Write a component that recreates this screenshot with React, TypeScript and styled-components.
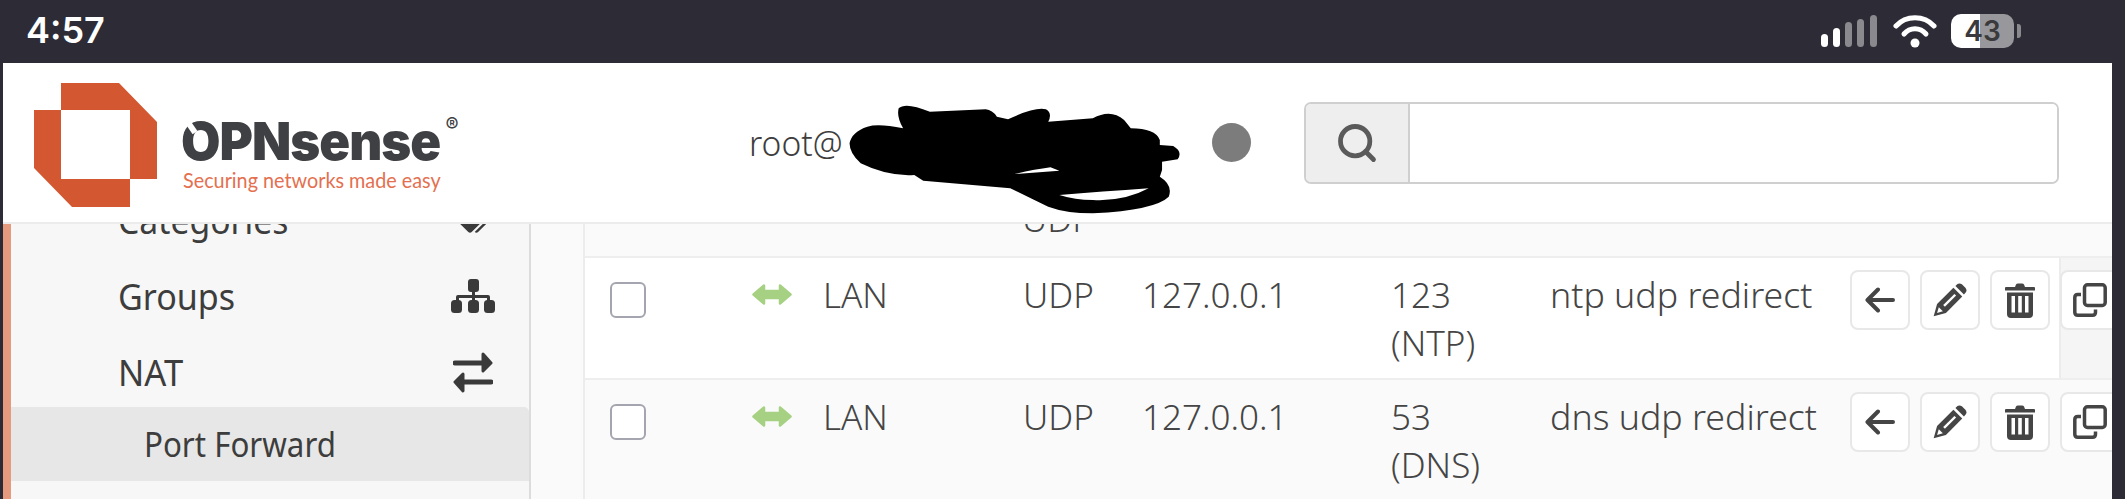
import styled, { createGlobalStyle } from "styled-components";
import { FaTags } from "react-icons/fa";
import { Search } from "lucide-react";

const GlobalStyle = createGlobalStyle`
  html, body {
    margin: 0;
    padding: 0;
    background: #2d2c36;
  }
`;

const Page = styled.div`
  width: 2125px;
  height: 499px;
  overflow: hidden;
  display: flex;
  flex-direction: column;
  background: #2d2c36;
  font-family: "Noto Sans", sans-serif;
  color: #3d3d3d;
`;

const StatusBar = styled.div`
  height: 63px;
  flex: none;
  display: flex;
  align-items: center;
  padding: 0 0 0 26px;
  box-sizing: border-box;
`;

const Clock = styled.span`
  font-family: "Inter", sans-serif;
  font-weight: 600;
  font-size: 36px;
  line-height: 63px;
  color: #fff;
  margin-top: -2px;
`;

const StatusIcons = styled.div`
  margin-left: auto;
  margin-right: 111px;
  display: flex;
  align-items: center;
  gap: 14px;
  margin-top: -2px;
`;

const SignalSvg = styled.svg`
  margin-right: 2px;
`;

const Battery = styled.div`
  position: relative;
  width: 63px;
  height: 34px;
  border-radius: 10px;
  background: linear-gradient(to right, #fff 46%, #98989c 46%);
  font-family: "Inter", sans-serif;
  font-weight: 600;
  font-size: 28px;
  line-height: 34px;
  text-align: center;
  color: #3a3a3c;

  &::after {
    content: "";
    position: absolute;
    left: 66px;
    top: 10px;
    width: 4px;
    height: 14px;
    border-radius: 0 3px 3px 0;
    background: #8a8a8e;
  }
`;

const Frame = styled.div`
  flex: 1;
  min-height: 0;
  margin: 0 13px 0 3px;
  display: flex;
  flex-direction: column;
  background: #fafafa;
`;

const Header = styled.header`
  height: 161px;
  flex: none;
  box-sizing: border-box;
  position: relative;
  display: flex;
  align-items: center;
  padding-left: 31px;
  background: #fff;
  border-bottom: 2px solid #ececec;
  z-index: 1;
`;

const LogoMark = styled.svg`
  width: 123px;
  height: 124px;
  flex: none;
  margin-top: 4px;
`;

const Brand = styled.div`
  margin-left: 24px;
  margin-top: 24px;
  width: 259px;
  display: flex;
  flex-direction: column;
`;

const Wordmark = styled.div`
  position: relative;
  font-family: "Inter", sans-serif;
  font-weight: 900;
  font-size: 52px;
  line-height: 50px;
  letter-spacing: -1px;
  color: #3f4044;
  white-space: nowrap;
  transform: scaleX(0.98);
  transform-origin: left center;

  &::before {
    content: "";
    position: absolute;
    left: 7px;
    top: 2px;
    width: 6px;
    height: 15px;
    background: #fff;
    transform: rotate(-35deg);
  }

  sup {
    position: absolute;
    left: 270px;
    top: -2px;
    font-size: 20px;
    line-height: 20px;
    font-weight: 500;
  }
`;

const Tagline = styled.div`
  font-family: "Lato", sans-serif;
  font-size: 22px;
  line-height: 26px;
  margin-left: 2px;
  white-space: nowrap;
  color: #e4704f;
  transform-origin: left center;
  transform: scaleX(0.9);
`;

const UserName = styled.div`
  margin-left: 309px;
  font-size: 35px;
  font-weight: 300;
  width: 463px;
  flex: none;
  color: #3d3d3d;
`;

const Scribble = styled.svg`
  position: absolute;
  left: 697px;
  top: -3px;
  width: 700px;
  height: 170px;
`;

const StatusDot = styled.span`
  width: 39px;
  height: 39px;
  flex: none;
  border-radius: 50%;
  background: #7c7c7c;
`;

const SearchGroup = styled.div`
  margin-left: 53px;
  width: 755px;
  height: 82px;
  flex: none;
  box-sizing: border-box;
  display: flex;
  border: 2px solid #cfcfcf;
  border-radius: 7px;
  overflow: hidden;
`;

const SearchAddon = styled.div`
  width: 102px;
  flex: none;
  display: flex;
  align-items: center;
  justify-content: center;
  background: #eeeeee;
  border-right: 2px solid #cfcfcf;
  color: #5a5a5a;
`;

const SearchInput = styled.div`
  flex: 1;
  background: #fff;
`;

const Body = styled.div`
  flex: 1;
  min-height: 0;
  display: flex;
  overflow: hidden;
`;

const Sidebar = styled.nav`
  width: 528px;
  flex: none;
  box-sizing: border-box;
  overflow: hidden;
  background: #f7f7f7;
  border-left: 8px solid #e69a7e;
  border-right: 2px solid #dcdcdc;
`;

const SideList = styled.div`
  margin-top: -42px;
  display: flex;
  flex-direction: column;
`;

const SideItem = styled.div<{ $h: number; $shift?: number }>`
  height: ${(p) => p.$h}px;
  flex: none;
  display: flex;
  align-items: center;
  justify-content: space-between;
  padding: ${(p) => p.$shift ?? 0}px 34px 0 107px;
  box-sizing: border-box;
  font-size: 36px;
`;

const ActiveItem = styled.div`
  height: 74px;
  flex: none;
  margin-left: -8px;
  display: flex;
  align-items: center;
  padding-left: 133px;
  font-size: 34px;
  background: #e7e7e7;
  border-left: 8px solid #b04a24;
  border-radius: 5px 5px 0 0;
`;

const Squeeze = styled.span<{ $x: number }>`
  display: inline-block;
  white-space: nowrap;
  transform: scaleX(${(p) => p.$x});
  transform-origin: left center;
`;

const SideIcon = styled.span`
  display: flex;
  justify-content: center;
  width: 44px;
  color: #3a3a3a;

  svg {
    display: block;
  }
`;

const Gutter = styled.div`
  width: 52px;
  flex: none;
  background: #fafafa;
`;

const Table = styled.div`
  flex: 1;
  min-width: 0;
  overflow: hidden;
  border-left: 2px solid #ececec;
`;

const Row = styled.div<{ $first: boolean }>`
  display: grid;
  grid-template-columns: 25px 142px 71px 200px 119px 249px 159px 300px 1fr;
  padding-top: 12px;
  height: ${(p) => (p.$first ? "108px" : "140px")};
  background: ${(p) =>
    p.$first
      ? "linear-gradient(to right, #fff 1474px, #ececec 1474px, #ececec 1476px, #f5f5f5 1476px)"
      : "#fafafa"};
  border-bottom: 2px solid #eeeeee;
  font-size: 35px;
  font-weight: 300;
  line-height: 48px;
  color: #454545;
`;

const ClippedRow = styled.div`
  height: 32px;
  overflow: hidden;
  padding-left: 437px;
  background: #fafafa;
  border-bottom: 2px solid #eeeeee;
  font-size: 35px;
  font-weight: 300;
  line-height: 48px;
  color: #454545;
`;

const ClippedCell = styled.div`
  margin-top: -29px;
`;

const Checkbox = styled.span`
  display: block;
  width: 36px;
  height: 36px;
  box-sizing: border-box;
  border: 2px solid #a5a5b0;
  border-radius: 6px;
  background: #fff;
  margin-top: 12px;
`;

const DirectionIcon = styled.svg`
  display: block;
  width: 40px;
  height: 21px;
  margin-top: 14px;
  color: #a6d182;
`;

const Cell = styled.div`
  padding-top: 1px;
`;

const Actions = styled.div`
  display: flex;
  gap: 10px;
`;

const ActionButton = styled.button`
  width: 60px;
  height: 60px;
  flex: none;
  padding: 0;
  display: flex;
  align-items: center;
  justify-content: center;
  background: #fff;
  border: 2px solid #e8e8e8;
  border-radius: 8px;
  color: #454545;
`;

const rows = [
  { port: "123", service: "(NTP)", name: "ntp udp redirect" },
  { port: "53", service: "(DNS)", name: "dns udp redirect" },
];

function WifiIcon() {
  return (
    <svg width="44" height="34" viewBox="0 0 44 34" fill="none" stroke="#fff" strokeWidth="5" strokeLinecap="round">
      <path d="M3 12 C13 1 31 1 41 12" />
      <path d="M11 20 C17 13 27 13 33 20" />
      <circle cx="22" cy="29" r="4.5" fill="#fff" stroke="none" />
    </svg>
  );
}

function SignalIcon() {
  const bars = [
    { x: 0, h: 13, c: "#fff" },
    { x: 12, h: 19, c: "#fff" },
    { x: 24, h: 25, c: "#8a8a8e" },
    { x: 36, h: 28, c: "#8a8a8e" },
    { x: 49, h: 32, c: "#8a8a8e" },
  ];
  return (
    <SignalSvg width="56" height="32" viewBox="0 0 56 32">
      {bars.map((b) => (
        <rect key={b.x} x={b.x} y={32 - b.h} width="7" height={b.h} rx="3.5" fill={b.c} />
      ))}
    </SignalSvg>
  );
}

function SitemapIcon() {
  return (
    <svg width="44" height="34" viewBox="0 0 44 34" fill="currentColor">
      <rect x="17" y="0" width="11" height="13" rx="3" />
      <rect x="21" y="12" width="3" height="10" />
      <path d="M5 23 V18 Q5 16 7 16 H37 Q39 16 39 18 V23 H36 V19 H8 V23 Z" />
      <rect x="0" y="21" width="11" height="13" rx="3.5" />
      <rect x="17" y="21" width="11" height="13" rx="3.5" />
      <rect x="33" y="21" width="11" height="13" rx="3.5" />
    </svg>
  );
}

function ExchangeIcon() {
  return (
    <svg width="40" height="41" viewBox="0 0 40 41" fill="currentColor" stroke="currentColor" strokeLinejoin="round" strokeLinecap="round">
      <path d="M2 11 H32" strokeWidth="5" fill="none" />
      <path d="M30 2 L38 11 L30 19 Z" strokeWidth="3" />
      <path d="M38 30 H8" strokeWidth="5" fill="none" />
      <path d="M10 22 L2 30 L10 39 Z" strokeWidth="3" />
    </svg>
  );
}

function ArrowsIcon() {
  return (
    <path
      d="M1.5 10.5 L12 1.5 V7 H28 V1.5 L38.5 10.5 L28 19.5 V14 H12 V19.5 Z"
      fill="currentColor"
      stroke="currentColor"
      strokeWidth="2.5"
      strokeLinejoin="round"
    />
  );
}

function BackIcon() {
  return (
    <svg width="30" height="26" viewBox="0 0 30 26" fill="none" stroke="currentColor" strokeWidth="4" strokeLinecap="round" strokeLinejoin="round">
      <path d="M28 13 H3 M13 2.5 L2.5 13 L13 23.5" />
    </svg>
  );
}

function PencilIcon() {
  return (
    <svg width="34" height="34" viewBox="0 0 100 100">
      <path d="M2 98 L12 62 L60 14 L86 40 L38 88 Z" fill="currentColor" />
      <path d="M72 3 Q78 -1 85 4 L96 15 Q101 22 96 28 L91 34 L66 9 Z" fill="currentColor" />
      <path d="M30 65 L63 32 L68 37 L35 70 Z" fill="#fff" />
      <path d="M12 88 L17 71 L29 83 Z" fill="#fff" />
    </svg>
  );
}

function TrashIcon() {
  return (
    <svg width="30" height="35" viewBox="0 0 30 35" fill="currentColor">
      <path d="M0 5 Q0 4 1 4 H10 L11 1.5 Q11.5 0.5 13 0.5 H17 Q18.5 0.5 19 1.5 L20 4 H29 Q30 4 30 5 V7.5 H0 Z" />
      <path fillRule="evenodd" d="M2 9.5 H28 V31 Q28 35 24 35 H6 Q2 35 2 31 Z M6.5 13 V29.5 H10 V13 Z M13.2 13 V29.5 H16.8 V13 Z M20 13 V29.5 H23.5 V13 Z" />
    </svg>
  );
}

function CloneIcon() {
  return (
    <svg width="34" height="34" viewBox="0 0 34 34" fill="none" stroke="currentColor" strokeWidth="3.5">
      <rect x="11.5" y="1.8" width="20.7" height="20.7" rx="3" />
      <path d="M8 11.5 H4.8 Q1.8 11.5 1.8 14.5 V29.2 Q1.8 32.2 4.8 32.2 H19.5 Q22.5 32.2 22.5 29.2 V26.5" />
    </svg>
  );
}

function App() {
  return (
    <Page>
      <GlobalStyle />
      <StatusBar>
        <Clock>4:57</Clock>
        <StatusIcons>
          <SignalIcon />
          <WifiIcon />
          <Battery>43</Battery>
        </StatusIcons>
      </StatusBar>
      <Frame>
        <Header>
          <LogoMark viewBox="0 0 123 124">
            <path
              fill="#d35832"
              fillRule="evenodd"
              d="M27 0 H85 L123 39 V96 H96 V124 H38 L0 85 V27 H27 Z M27 27 V96 H96 V27 Z"
            />
          </LogoMark>
          <Brand>
            <Wordmark>
              OPNsense<sup>®</sup>
            </Wordmark>
            <Tagline>Securing networks made easy</Tagline>
          </Brand>
          <UserName>
            <Squeeze $x={0.96}>root@</Squeeze>
          </UserName>
          <Scribble viewBox="0 0 1568 510" preserveAspectRatio="none">
            <path
              fill="#000"
              fillRule="evenodd"
              d="M335 250 Q340 215 375 200 Q400 190 455 205 Q440 170 445 145 Q460 125 515 155 L640 148 Q655 150 665 170 L690 178 Q750 140 775 148 Q790 160 780 185 L880 175 Q920 145 950 180 L965 205 Q1020 205 1030 240 L1030 255 L1060 258 Q1082 275 1070 298 L1035 305 L1035 330 L1030 350 Q1060 375 1050 410 Q1020 450 880 460 Q820 460 780 440 L695 385 L500 362 L480 345 Q420 350 360 310 Q335 280 335 250 Z M705 342 Q750 328 785 322 L805 332 Z M805 405 Q900 395 1005 385 Q950 425 880 420 Q840 420 805 405 Z"
            />
          </Scribble>
          <StatusDot />
          <SearchGroup>
            <SearchAddon>
              <Search size={44} strokeWidth={2.6} />
            </SearchAddon>
            <SearchInput />
          </SearchGroup>
        </Header>
        <Body>
          <Sidebar>
            <SideList>
              <SideItem $h={76}>
                <Squeeze $x={0.937}>Categories</Squeeze>
                <SideIcon>
                  <FaTags size={32} />
                </SideIcon>
              </SideItem>
              <SideItem $h={76}>
                <Squeeze $x={0.946}>Groups</Squeeze>
                <SideIcon>
                  <SitemapIcon />
                </SideIcon>
              </SideItem>
              <SideItem $h={73} $shift={3}>
                <Squeeze $x={0.96}>NAT</Squeeze>
                <SideIcon>
                  <ExchangeIcon />
                </SideIcon>
              </SideItem>
              <ActiveItem>
                <Squeeze $x={0.92}>Port Forward</Squeeze>
              </ActiveItem>
            </SideList>
          </Sidebar>
          <Gutter />
          <Table>
            <ClippedRow>
              <ClippedCell>UDP</ClippedCell>
            </ClippedRow>
            {rows.map((r, i) => (
              <Row key={r.name} $first={i === 0}>
                <span />
                <span>
                  <Checkbox />
                </span>
                <DirectionIcon viewBox="0 0 40 21">
                  <ArrowsIcon />
                </DirectionIcon>
                <Cell>LAN</Cell>
                <Cell>UDP</Cell>
                <Cell>127.0.0.1</Cell>
                <Cell>
                  {r.port}
                  <br />
                  {r.service}
                </Cell>
                <Cell>
                  <Squeeze $x={1.02}>{r.name}</Squeeze>
                </Cell>
                <Actions>
                  <ActionButton>
                    <BackIcon />
                  </ActionButton>
                  <ActionButton>
                    <PencilIcon />
                  </ActionButton>
                  <ActionButton>
                    <TrashIcon />
                  </ActionButton>
                  <ActionButton>
                    <CloneIcon />
                  </ActionButton>
                </Actions>
              </Row>
            ))}
          </Table>
        </Body>
      </Frame>
    </Page>
  );
}

export default App;
